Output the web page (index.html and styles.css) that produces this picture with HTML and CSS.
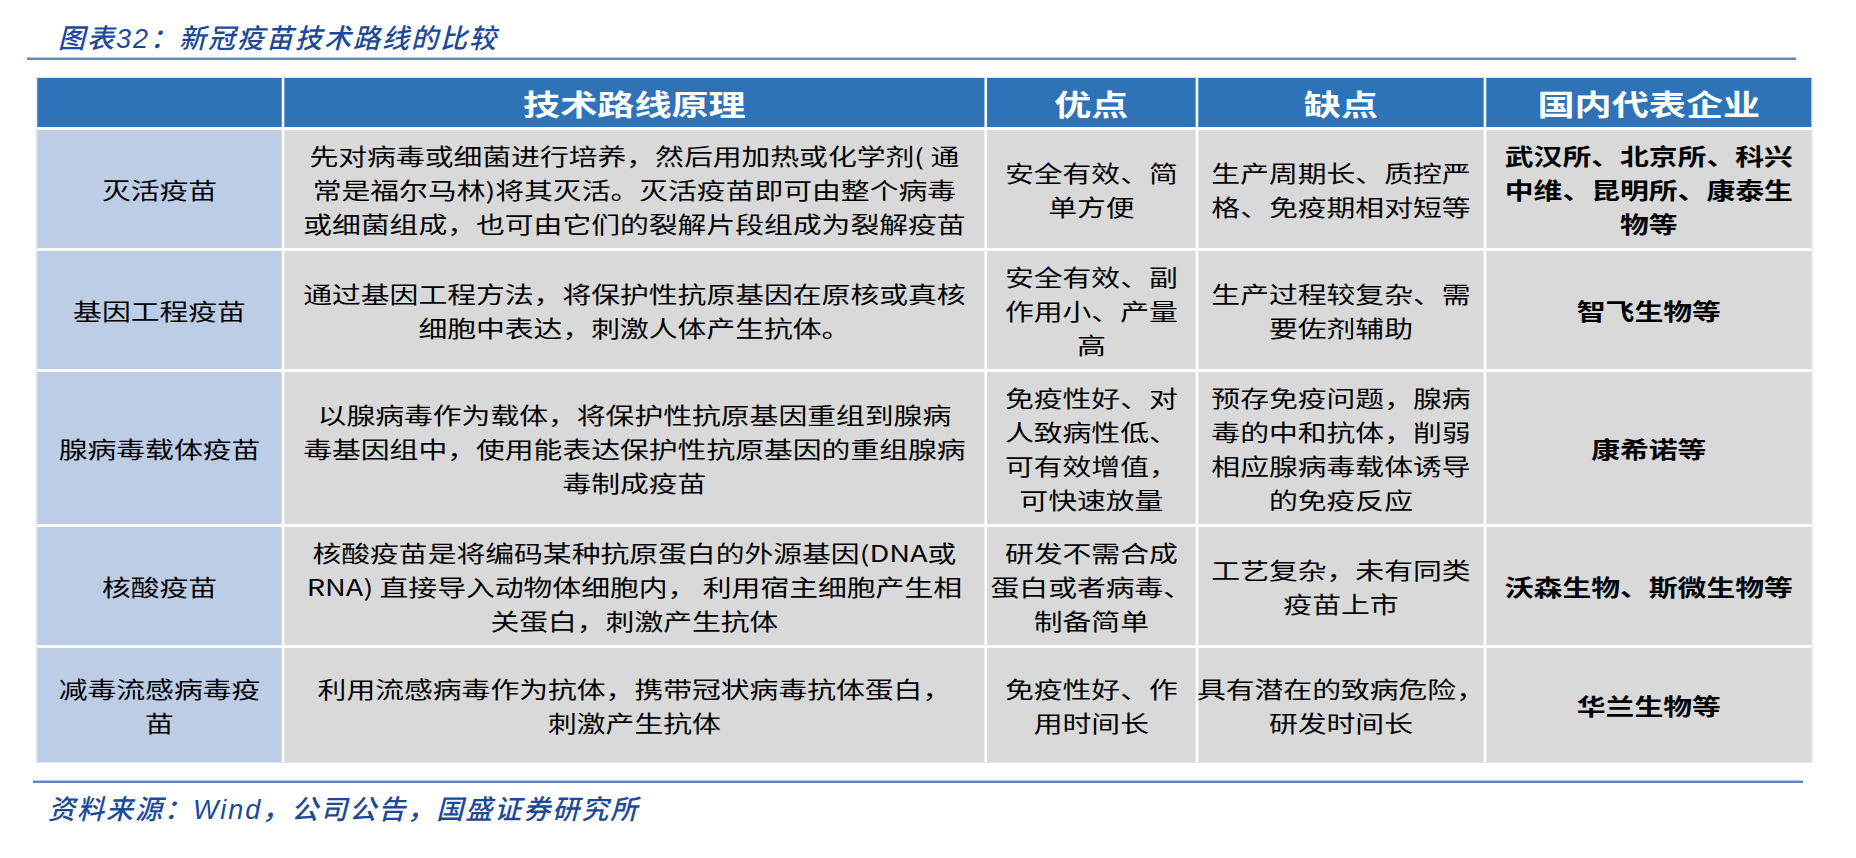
FILE: index.html
```html
<!DOCTYPE html>
<html lang="zh-CN">
<head>
<meta charset="utf-8">
<title>新冠疫苗技术路线的比较</title>
<link rel="stylesheet" href="styles.css">
</head>
<body>
<main class="page">
  <h1 class="fig-title">图表32：新冠疫苗技术路线的比较</h1>
  <div class="rule rule-top"></div>
  <div class="table-wrap">
    <div class="grid">
      <div class="cell head"></div>
      <div class="cell head">技术路线原理</div>
      <div class="cell head">优点</div>
      <div class="cell head">缺点</div>
      <div class="cell head">国内代表企业</div>

      <div class="cell name">灭活疫苗</div>
      <div class="cell">先对病毒或细菌进行培养，然后用加热或化学剂( 通<br>常是福尔马林)将其灭活。灭活疫苗即可由整个病毒<br>或细菌组成，也可由它们的裂解片段组成为裂解疫苗</div>
      <div class="cell">安全有效、简<br>单方便</div>
      <div class="cell">生产周期长、质控严<br>格、免疫期相对短等</div>
      <div class="cell firm">武汉所、北京所、科兴<br>中维、昆明所、康泰生<br>物等</div>

      <div class="cell name">基因工程疫苗</div>
      <div class="cell">通过基因工程方法，将保护性抗原基因在原核或真核<br>细胞中表达，刺激人体产生抗体。</div>
      <div class="cell">安全有效、副<br>作用小、产量<br>高</div>
      <div class="cell">生产过程较复杂、需<br>要佐剂辅助</div>
      <div class="cell firm">智飞生物等</div>

      <div class="cell name">腺病毒载体疫苗</div>
      <div class="cell">以腺病毒作为载体，将保护性抗原基因重组到腺病<br>毒基因组中，使用能表达保护性抗原基因的重组腺病<br>毒制成疫苗</div>
      <div class="cell">免疫性好、对<br>人致病性低、<br>可有效增值，<br>可快速放量</div>
      <div class="cell">预存免疫问题，腺病<br>毒的中和抗体，削弱<br>相应腺病毒载体诱导<br>的免疫反应</div>
      <div class="cell firm">康希诺等</div>

      <div class="cell name">核酸疫苗</div>
      <div class="cell">核酸疫苗是将编码某种抗原蛋白的外源基因(DNA或<br>RNA) 直接导入动物体细胞内， 利用宿主细胞产生相<br>关蛋白，刺激产生抗体</div>
      <div class="cell">研发不需合成<br>蛋白或者病毒、<br>制备简单</div>
      <div class="cell">工艺复杂，未有同类<br>疫苗上市</div>
      <div class="cell firm">沃森生物、斯微生物等</div>

      <div class="cell name">减毒流感病毒疫<br>苗</div>
      <div class="cell">利用流感病毒作为抗体，携带冠状病毒抗体蛋白，<br>刺激产生抗体</div>
      <div class="cell">免疫性好、作<br>用时间长</div>
      <div class="cell">具有潜在的致病危险，<br>研发时间长</div>
      <div class="cell firm">华兰生物等</div>
    </div>
  </div>
  <div class="rule rule-bottom"></div>
  <p class="source">资料来源：Wind，公司公告，国盛证券研究所</p>
</main>
</body>
</html>
```

FILE: styles.css
```css
* {
  box-sizing: border-box;
  margin: 0;
  padding: 0;
}

html,
body {
  background: #ffffff;
}

body {
  font-family: "Noto Sans CJK SC", sans-serif;
  color: #000000;
}

.page {
  width: 1856px;
  padding-top: 22px;
}

.fig-title {
  margin-left: 58px;
  font-family: "Liberation Sans", "Noto Sans CJK SC", sans-serif;
  font-size: 27px;
  font-weight: 500;
  font-style: italic;
  letter-spacing: 2px;
  line-height: 34px;
  color: #1c4a99;
}

.rule {
  height: 3px;
  background: linear-gradient(#b4c7e5 0 1px, #5e86c4 1px 3px);
}

.rule-top {
  margin: 1px 0 0 27px;
  width: 1769px;
}

.table-wrap {
  margin: 17px 0 0 36px;
  width: 1388px;
  transform: scaleX(1.28);
  transform-origin: 0 0;
}

.grid {
  display: grid;
  grid-template-columns: 191px 547px 163px 223px 254px;
  grid-template-rows: 49px 118px 118px 152px 118px 114px;
  gap: 3px 2px;
  border: 1px solid #dfe6f0;
  background: #ffffff;
}

.cell {
  display: flex;
  align-items: center;
  justify-content: center;
  text-align: center;
  white-space: nowrap;
  font-size: 22.5px;
  line-height: 34px;
  background: #d9d9d9;
  color: #000000;
}

.head {
  background: #2e72b8;
  color: #ffffff;
  font-size: 29px;
  font-weight: 700;
  line-height: 40px;
}

.name {
  background: #bccde5;
}

.firm {
  font-weight: 700;
}

.rule-bottom {
  margin: 17px 0 0 33px;
  width: 1770px;
}

.source {
  margin: 10px 0 0 48px;
  font-family: "Liberation Sans", "Noto Sans CJK SC", sans-serif;
  font-size: 27px;
  font-weight: 500;
  font-style: italic;
  letter-spacing: 2px;
  line-height: 34px;
  color: #1c4a99;
}
```
